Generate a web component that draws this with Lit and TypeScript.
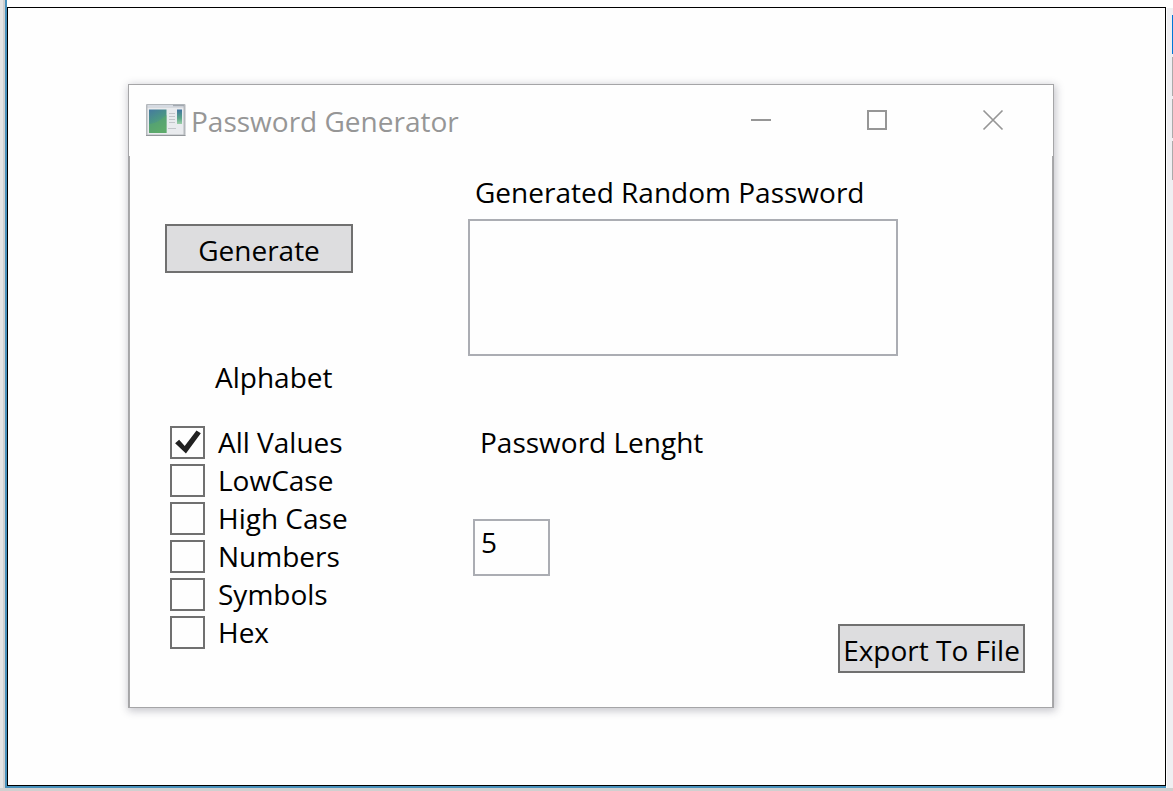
import { LitElement, html, css, svg } from "lit";
import { customElement, state } from "lit/decorators.js";

const appIcon = svg`
  <svg class="app-icon" viewBox="0 0 40 34" aria-hidden="true">
    <defs>
      <linearGradient id="pane" x1="0" y1="0" x2="0.4" y2="1">
        <stop offset="0" stop-color="#4479a0" />
        <stop offset="0.5" stop-color="#4b9585" />
        <stop offset="1" stop-color="#62ad72" />
      </linearGradient>
      <linearGradient id="strip" x1="0" y1="0" x2="0" y2="1">
        <stop offset="0" stop-color="#3f73a0" />
        <stop offset="0.6" stop-color="#5aa688" />
        <stop offset="1" stop-color="#9ccfa8" />
      </linearGradient>
    </defs>
    <rect x="0" y="1" width="39.5" height="32" rx="1" fill="#b4b8bc" />
    <rect x="1.500" y="2" width="36" height="2.5" fill="#d5dae2" />
    <path d="M27 2.500h11" stroke="#a3a9b0" stroke-width="1.4" />
    <rect x="1.500" y="4.500" width="36" height="27" fill="#e9ebee" />
    <rect x="3" y="6.500" width="17.500" height="23.500" fill="url(#pane)" />
    <path d="M3 21C9 21 15 17 20.500 12V30H3z" fill="#5aa868" opacity="0.6" />
    <path d="M23 10.500h6M23 13.500h6M23 16.500h6M23 19.500h6M22 25.500h8" stroke="#c3c6ca" stroke-width="1" />
    <rect x="31" y="6.500" width="5" height="14.500" fill="url(#strip)" />
    <path d="M0 32.500h39.500" stroke="#93979b" />
  </svg>`;

const minimizeIcon = svg`
  <svg class="glyph" viewBox="0 0 22 22" aria-hidden="true"><path d="M1 11h20" /></svg>`;
const maximizeIcon = svg`
  <svg class="glyph" viewBox="0 0 22 22" aria-hidden="true"><path d="M2 2h18v18H2z" /></svg>`;
const closeIcon = svg`
  <svg class="glyph thin" viewBox="0 0 22 22" aria-hidden="true"><path d="M1.500 1.500l19 19M20.500 1.500l-19 19" /></svg>`;

@customElement("app-root")
export class AppRoot extends LitElement {
  static styles = css`
    :host {
      display: block;
      color: #000;
      font-family: "Open Sans", "Noto Sans", sans-serif;
      font-size: 28px;
      line-height: 38px;
    }
    * {
      box-sizing: border-box;
    }
    button,
    input,
    textarea {
      margin: 0;
      color: inherit;
      font: inherit;
      border-radius: 0;
    }
    .desktop {
      display: grid;
      grid-template-columns: 5px 1fr 7px;
      grid-template-rows: 1fr 3px;
      min-height: 100vh;
      background: #fefefe;
    }
    .edge-left {
      background: #e4e4e4;
      border-right: 2px solid #cfcfcf;
    }
    .edge-bottom {
      grid-column: 1 / -1;
      background: #d0d0d0;
    }
    .edge-right {
      display: flex;
      flex-direction: column;
      align-items: flex-end;
      gap: 3px;
      margin-top: 8px;
      padding-top: 7px;
      background: #efeff2;
      border-left: 1px solid #fefefe;
    }
    .tab {
      width: 1px;
      height: 39px;
      background: #ababab;
    }
    .tab.active {
      background: #0078d7;
    }
    .sheet {
      display: flex;
      padding-top: 7px;
      border-left: 2px solid #4690bb;
      border-bottom: 2px solid #4690bb;
    }
    .canvas {
      flex: 1;
      display: flex;
      padding: 76px 111px 77px 120px;
      border: 1px solid #000;
    }
    .window {
      flex: 1;
      display: flex;
      flex-direction: column;
      border: 1px solid #a5a5a7;
      background: #fefefe;
      box-shadow: 1px 2px 8px 1px rgba(40, 40, 60, 0.26);
    }
    .titlebar {
      display: flex;
      align-items: center;
      height: 71px;
      padding: 0 2px 2px 17px;
      color: #969696;
    }
    .app-icon {
      width: 40px;
      height: 34px;
      margin-right: 5px;
    }
    .title {
      flex: 1;
      margin: 0;
      padding-top: 2px;
      font-size: inherit;
      font-weight: 400;
    }
    .caption {
      display: flex;
      align-items: center;
      justify-content: center;
      width: 116px;
      height: 69px;
      padding: 0;
      border: 0;
      background: none;
    }
    .glyph {
      width: 22px;
      height: 22px;
      fill: none;
      stroke: #969696;
      stroke-width: 2;
    }
    .thin {
      stroke-width: 1.700;
    }
    .client {
      flex: 1;
      display: grid;
      grid-template-columns: 303px 1fr;
      padding: 17px 27px 34px 35px;
      border: solid #a9a9ab;
      border-width: 0 1px;
    }
    .options {
      padding-top: 51px;
    }
    .push {
      display: block;
      height: 49px;
      padding: 2px 0 0;
      text-align: center;
      white-space: nowrap;
      background: #dddddf;
      border: 2px solid #707070;
    }
    .generate {
      width: 188px;
    }
    .alphabet {
      margin: 85px 0 0;
      padding: 0;
      border: 0;
    }
    .alphabet-title {
      margin: 0 0 27px;
      padding: 0 0 0 50px;
    }
    .option {
      display: flex;
      align-items: center;
      gap: 13px;
      padding-left: 5px;
    }
    .box {
      display: grid;
      width: 35px;
      height: 33px;
      appearance: none;
      background: #fefefe;
      border: 2px solid #707070;
    }
    .box:checked::before {
      content: "";
      background: #212121;
      clip-path: polygon(10% 54%, 23% 42%, 41% 64%, 79% 10%, 93% 20%, 45% 90%);
    }
    .output {
      display: flex;
      flex-direction: column;
      align-items: flex-start;
    }
    .output-label {
      margin-bottom: 8px;
      padding-left: 7px;
    }
    .field {
      background: #fefefe;
      border: 2px solid #abadb3;
      outline: none;
    }
    .password {
      width: 100%;
      max-width: 430px;
      height: 137px;
      padding: 4px 6px;
      resize: none;
    }
    .length-label {
      margin: 67px 0 58px;
      padding-left: 12px;
    }
    .length {
      width: 77px;
      height: 57px;
      margin-left: 5px;
      padding: 0 6px 11px;
    }
    .export {
      width: 187px;
      margin-top: auto;
      align-self: flex-end;
    }
  `;

  @state() private password = "";
  @state() private length = "5";
  @state() private picked = new Set<string>(["All Values"]);

  private readonly alphabets: Record<string, string> = {
    "All Values": "abcdefghijklmnopqrstuvwxyzABCDEFGHIJKLMNOPQRSTUVWXYZ0123456789!@#$%&*?",
    LowCase: "abcdefghijklmnopqrstuvwxyz",
    "High Case": "ABCDEFGHIJKLMNOPQRSTUVWXYZ",
    Numbers: "0123456789",
    Symbols: "!@#$%&*?",
    Hex: "0123456789ABCDEF",
  };

  private toggle(name: string) {
    const next = new Set(this.picked);
    if (!next.delete(name)) next.add(name);
    this.picked = next;
  }

  private generate() {
    const pool = [...this.picked].map((name) => this.alphabets[name]).join("");
    const count = Math.max(0, Number.parseInt(this.length, 10) || 0);
    this.password = pool
      ? Array.from({ length: count }, () => pool[Math.floor(Math.random() * pool.length)]).join("")
      : "";
  }

  private exportFile() {
    const link = document.createElement("a");
    link.href = URL.createObjectURL(new Blob([this.password], { type: "text/plain" }));
    link.download = "password.txt";
    link.click();
    URL.revokeObjectURL(link.href);
  }

  render() {
    return html`
      <div class="desktop">
        <div class="edge-left"></div>
        <div class="sheet">
          <main class="canvas">
            <section class="window">
              <header class="titlebar">
                ${appIcon}
                <h1 class="title">Password Generator</h1>
                <button class="caption" aria-label="Minimize">${minimizeIcon}</button>
                <button class="caption" aria-label="Maximize">${maximizeIcon}</button>
                <button class="caption" aria-label="Close">${closeIcon}</button>
              </header>
              <div class="client">
                <div class="options">
                  <button class="push generate" @click=${this.generate}>Generate</button>
                  <fieldset class="alphabet">
                    <legend class="alphabet-title">Alphabet</legend>
                    ${Object.keys(this.alphabets).map(
                      (name) => html`
                        <label class="option">
                          <input
                            class="box"
                            type="checkbox"
                            .checked=${this.picked.has(name)}
                            @change=${() => this.toggle(name)}
                          />
                          <span>${name}</span>
                        </label>
                      `
                    )}
                  </fieldset>
                </div>
                <div class="output">
                  <label class="output-label" for="password">Generated Random Password</label>
                  <textarea id="password" class="field password" .value=${this.password}></textarea>
                  <label class="length-label" for="length">Password Lenght</label>
                  <input
                    id="length"
                    class="field length"
                    type="text"
                    inputmode="numeric"
                    .value=${this.length}
                    @input=${(e: Event) => (this.length = (e.target as HTMLInputElement).value)}
                  />
                  <button class="push export" @click=${this.exportFile}>Export To File</button>
                </div>
              </div>
            </section>
          </main>
        </div>
        <div class="edge-right">
          <span class="tab active"></span>
          <span class="tab"></span>
          <span class="tab"></span>
          <span class="tab"></span>
        </div>
        <div class="edge-bottom"></div>
      </div>
    `;
  }
}
